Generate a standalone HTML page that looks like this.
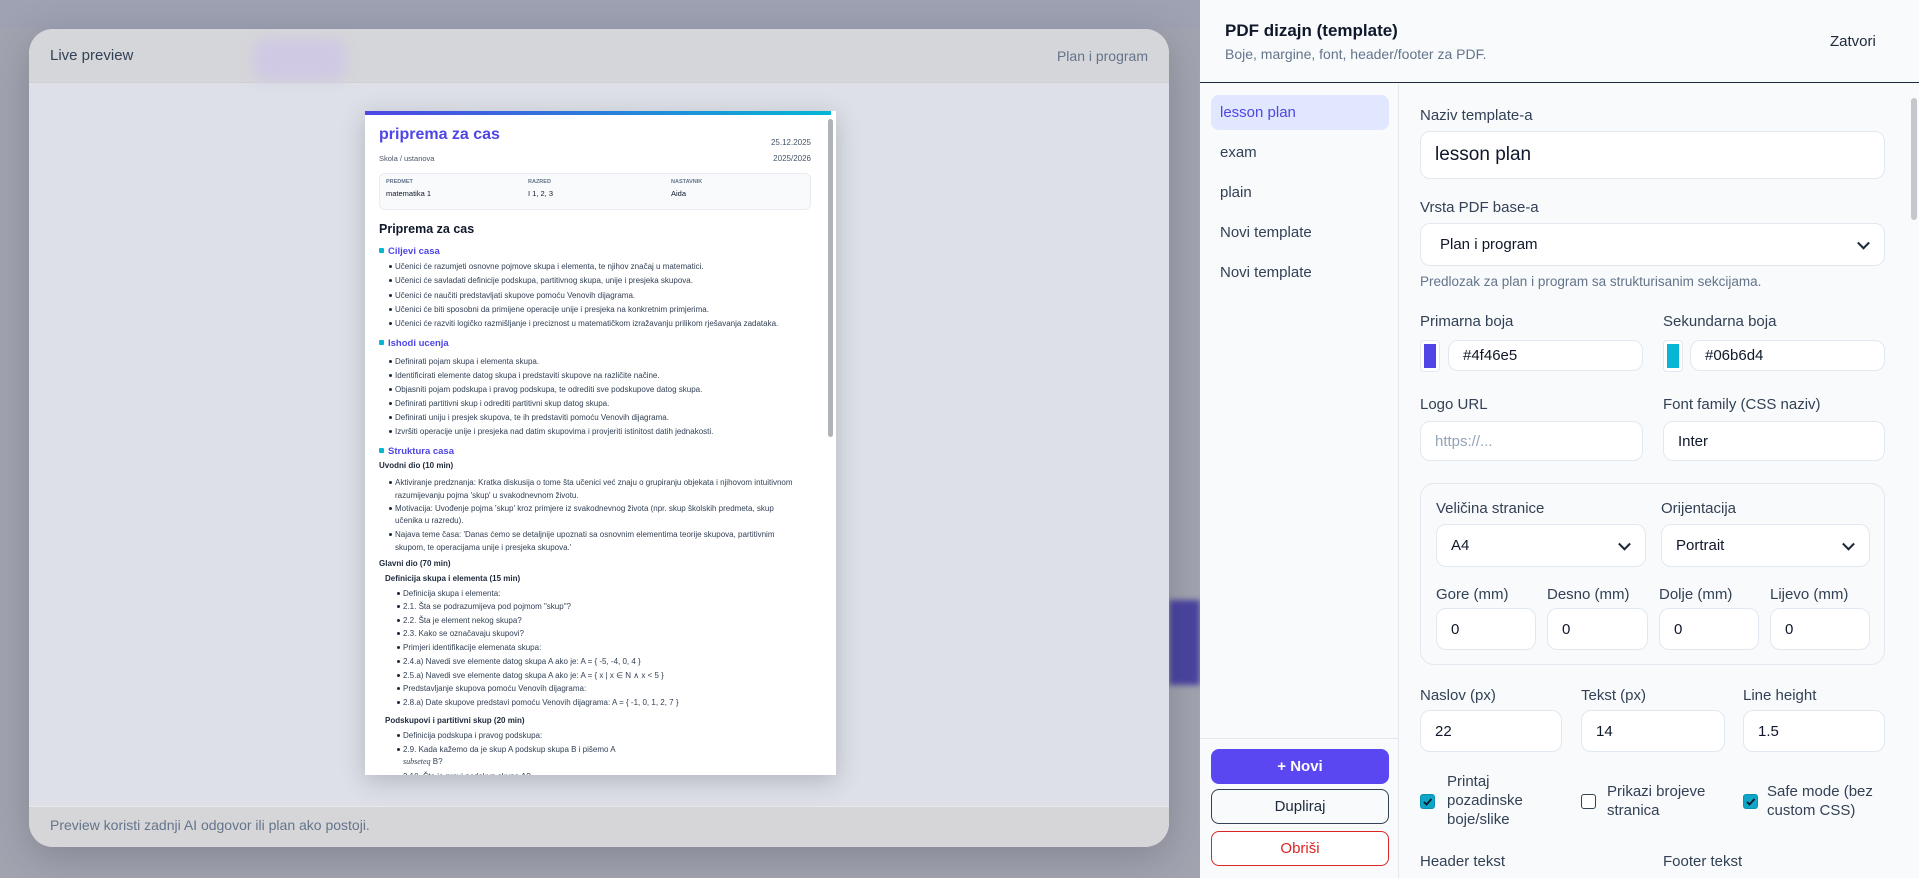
<!DOCTYPE html>
<html><head><meta charset="utf-8">
<style>
*{box-sizing:border-box;margin:0;padding:0}
body{width:1919px;height:878px;overflow:hidden;position:relative;background:#a2a5b0;font-family:"Liberation Sans",sans-serif;color:#1e293b}
.abs{position:absolute}
.card{left:29px;top:29px;width:1140px;height:818px;border-radius:24px;background:#dde0e7;overflow:hidden;box-shadow:0 10px 40px rgba(40,40,60,.25)}
.chead{left:0;top:0;width:1140px;height:54px;background:#d5d6d9;border-bottom:1px solid #cfd1d6}
.cfoot{left:0;top:777px;width:1140px;height:41px;background:#d6d6d8;border-top:1px solid #e6e7ea}
.doc{left:365px;top:111px;width:471px;height:664px;background:#fff;overflow:hidden;box-shadow:0 6px 22px rgba(60,60,80,.25)}
.doc .bar{left:0;top:0;width:466px;height:4px;background:linear-gradient(90deg,#4f46e5,#06b6d4)}
.doc div,.doc p{white-space:nowrap}
.t8{font-size:8px;color:#334155}
.li{position:absolute;font-size:8px;color:#334155}
.li:before{content:"";position:absolute;left:-6px;top:3px;width:3px;height:3px;border-radius:50%;background:#1e293b}
.sec{position:absolute;left:14px;font-size:9.5px;font-weight:bold;color:#4f46e5}
.sec:before{content:"";display:inline-block;width:5px;height:5px;background:#06b6d4;border-radius:1px;margin-right:4px;vertical-align:1px}
.sub{position:absolute;font-size:8px;font-weight:bold;color:#1e293b}
.panel{left:1200px;top:0;width:719px;height:878px;background:#f8fafc}
.lbl{position:absolute;font-size:15px;color:#334155}
.inp{position:absolute;background:#fff;border:1px solid #e2e8f0;border-radius:10px;font-size:15px;color:#0f172a;padding-left:14px;display:flex;align-items:center}
.sel:after{content:"";position:absolute;right:16px;top:50%;width:7px;height:7px;border-right:2px solid #1e293b;border-bottom:2px solid #1e293b;transform:translateY(-70%) rotate(45deg)}
.item{position:absolute;left:20px;font-size:15px;color:#334155}
.btn{position:absolute;left:11px;width:178px;height:35px;border-radius:8px;font-size:15px;display:flex;align-items:center;justify-content:center}
.cb{position:absolute;width:15px;height:15px;border-radius:3px}
.cbt{position:absolute;font-size:15px;color:#334155;line-height:19px}
</style></head><body>
<!-- blurred backdrop hints -->
<div class="abs" style="left:1169px;top:600px;width:31px;height:85px;background:#4a44a0;filter:blur(3px)"></div>
<div class="abs" style="left:0;top:0;width:1200px;height:29px;background:#9ea2b2"></div>

<div class="abs card">
  <div class="abs chead"></div>
  <div class="abs" style="left:224px;top:10px;width:93px;height:41px;background:#cfc9e4;border-radius:12px;filter:blur(6px)"></div>
  <div class="abs" style="left:21px;top:10px;font-size:15px;color:#334155;line-height:34px">Live preview</div>
  <div class="abs" style="right:21px;top:10px;font-size:14px;color:#64748b;line-height:34px">Plan i program</div>
  <div class="abs cfoot"></div>
  <div class="abs" style="left:21px;top:788px;font-size:14px;color:#64748b">Preview koristi zadnji AI odgovor ili plan ako postoji.</div>
</div>

<div class="abs doc">
  <div class="abs bar"></div>
  <div class="abs" style="left:463px;top:8px;width:5px;height:318px;background:#b0b3b8;border-radius:3px"></div>
  <div class="abs" style="left:14px;top:15px;font-size:16px;font-weight:bold;color:#4f46e5">priprema za cas</div>
  <div class="abs t8" style="right:25px;top:27px;color:#475569">25.12.2025</div>
  <div class="abs t8" style="left:14px;top:43px;color:#475569;font-size:7.5px">Skola / ustanova</div>
  <div class="abs t8" style="right:25px;top:43px;color:#475569">2025/2026</div>
  <div class="abs" style="left:14px;top:62px;width:432px;height:37px;background:#f8fafc;border:1px solid #e8ecf1;border-radius:6px"></div>
  <div class="abs" style="left:21px;top:68px;font-size:5.5px;color:#64748b;font-weight:bold">PREDMET</div>
  <div class="abs" style="left:163px;top:68px;font-size:5.5px;color:#64748b;font-weight:bold">RAZRED</div>
  <div class="abs" style="left:306px;top:68px;font-size:5.5px;color:#64748b;font-weight:bold">NASTAVNIK</div>
  <div class="abs" style="left:21px;top:78px;font-size:7.5px;color:#0f172a">matematika 1</div>
  <div class="abs" style="left:163px;top:78px;font-size:7.5px;color:#0f172a">I 1, 2, 3</div>
  <div class="abs" style="left:306px;top:78px;font-size:7.5px;color:#0f172a">Aida</div>
  <div class="abs" style="left:14px;top:111px;font-size:12.5px;font-weight:bold;color:#0f172a">Priprema za cas</div>

  <div class="sec" style="top:135px">Ciljevi casa</div>
  <div class="li" style="left:30px;top:151px">Učenici će razumjeti osnovne pojmove skupa i elementa, te njihov značaj u matematici.</div>
  <div class="li" style="left:30px;top:165px">Učenici će savladati definicije podskupa, partitivnog skupa, unije i presjeka skupova.</div>
  <div class="li" style="left:30px;top:180px">Učenici će naučiti predstavljati skupove pomoću Venovih dijagrama.</div>
  <div class="li" style="left:30px;top:194px">Učenici će biti sposobni da primijene operacije unije i presjeka na konkretnim primjerima.</div>
  <div class="li" style="left:30px;top:208px">Učenici će razviti logičko razmišljanje i preciznost u matematičkom izražavanju prilikom rješavanja zadataka.</div>

  <div class="sec" style="top:227px">Ishodi ucenja</div>
  <div class="li" style="left:30px;top:246px">Definirati pojam skupa i elementa skupa.</div>
  <div class="li" style="left:30px;top:260px">Identificirati elemente datog skupa i predstaviti skupove na različite načine.</div>
  <div class="li" style="left:30px;top:274px">Objasniti pojam podskupa i pravog podskupa, te odrediti sve podskupove datog skupa.</div>
  <div class="li" style="left:30px;top:288px">Definirati partitivni skup i odrediti partitivni skup datog skupa.</div>
  <div class="li" style="left:30px;top:302px">Definirati uniju i presjek skupova, te ih predstaviti pomoću Venovih dijagrama.</div>
  <div class="li" style="left:30px;top:316px">Izvršiti operacije unije i presjeka nad datim skupovima i provjeriti istinitost datih jednakosti.</div>

  <div class="sec" style="top:335px">Struktura casa</div>
  <div class="sub" style="left:14px;top:350px">Uvodni dio (10 min)</div>
  <div class="li" style="left:30px;top:367px">Aktiviranje predznanja: Kratka diskusija o tome šta učenici već znaju o grupiranju objekata i njihovom intuitivnom</div>
  <div class="t8 abs" style="left:30px;top:380px">razumijevanju pojma 'skup' u svakodnevnom životu.</div>
  <div class="li" style="left:30px;top:393px">Motivacija: Uvođenje pojma 'skup' kroz primjere iz svakodnevnog života (npr. skup školskih predmeta, skup</div>
  <div class="t8 abs" style="left:30px;top:405px">učenika u razredu).</div>
  <div class="li" style="left:30px;top:419px">Najava teme časa: 'Danas ćemo se detaljnije upoznati sa osnovnim elementima teorije skupova, partitivnim</div>
  <div class="t8 abs" style="left:30px;top:432px">skupom, te operacijama unije i presjeka skupova.'</div>

  <div class="sub" style="left:14px;top:448px">Glavni dio (70 min)</div>
  <div class="sub" style="left:20px;top:463px">Definicija skupa i elementa (15 min)</div>
  <div class="li" style="left:38px;top:478px">Definicija skupa i elementa:</div>
  <div class="li" style="left:38px;top:491px">2.1. Šta se podrazumijeva pod pojmom "skup"?</div>
  <div class="li" style="left:38px;top:505px">2.2. Šta je element nekog skupa?</div>
  <div class="li" style="left:38px;top:518px">2.3. Kako se označavaju skupovi?</div>
  <div class="li" style="left:38px;top:532px">Primjeri identifikacije elemenata skupa:</div>
  <div class="li" style="left:38px;top:546px">2.4.a) Navedi sve elemente datog skupa A ako je: A = { -5, -4, 0, 4 }</div>
  <div class="li" style="left:38px;top:560px">2.5.a) Navedi sve elemente datog skupa A ako je: A = { x | x ∈ N ∧ x &lt; 5 }</div>
  <div class="li" style="left:38px;top:573px">Predstavljanje skupova pomoću Venovih dijagrama:</div>
  <div class="li" style="left:38px;top:587px">2.8.a) Date skupove predstavi pomoću Venovih dijagrama: A = { -1, 0, 1, 2, 7 }</div>
  <div class="sub" style="left:20px;top:605px">Podskupovi i partitivni skup (20 min)</div>
  <div class="li" style="left:38px;top:620px">Definicija podskupa i pravog podskupa:</div>
  <div class="li" style="left:38px;top:634px">2.9. Kada kažemo da je skup A podskup skupa B i pišemo A</div>
  <div class="t8 abs" style="left:38px;top:646px"><i style="font-family:'Liberation Serif',serif">subseteq</i> B?</div>
  <div class="li" style="left:38px;top:661px">2.10. Šta je pravi podskup skupa A?</div>
</div>

<div class="abs panel">
  <div class="abs" style="left:0;top:0;width:719px;height:83px;border-bottom:1.5px solid #1e293b"></div>
  <div class="abs" style="left:25px;top:21px;font-size:17px;font-weight:bold;color:#0f172a">PDF dizajn (template)</div>
  <div class="abs" style="left:25px;top:46px;font-size:14px;color:#64748b">Boje, margine, font, header/footer za PDF.</div>
  <div class="abs" style="left:630px;top:33px;font-size:15px;color:#1e293b">Zatvori</div>

  <div class="abs" style="left:198px;top:84px;width:1px;height:794px;background:#e2e8f0"></div>
  <div class="abs" style="left:11px;top:95px;width:178px;height:35px;background:#e0e7ff;border-radius:8px"></div>
  <div class="item" style="top:104px;color:#4f46e5">lesson plan</div>
  <div class="item" style="top:144px">exam</div>
  <div class="item" style="top:184px">plain</div>
  <div class="item" style="top:224px">Novi template</div>
  <div class="item" style="top:264px">Novi template</div>
  <div class="abs" style="left:0;top:738px;width:198px;height:1px;background:#e2e8f0"></div>
  <div class="btn" style="top:749px;background:#5b47f2;color:#fff;font-weight:bold">+ Novi</div>
  <div class="btn" style="top:789px;border:1px solid #334155;color:#1e293b;background:#f8fafc">Dupliraj</div>
  <div class="btn" style="top:831px;border:1px solid #dc2626;color:#dc2626;background:#fff">Obriši</div>

  <div class="abs" style="left:711px;top:98px;width:6px;height:122px;background:#c5c7cc;border-radius:3px"></div>

  <div class="lbl" style="left:220px;top:107px">Naziv template-a</div>
  <div class="inp" style="left:220px;top:131px;width:465px;height:48px;font-size:19px">lesson plan</div>
  <div class="lbl" style="left:220px;top:199px">Vrsta PDF base-a</div>
  <div class="inp sel" style="left:220px;top:223px;width:465px;height:43px;font-size:15px;padding-left:19px">Plan i program</div>
  <div class="abs" style="left:220px;top:274px;font-size:13.5px;color:#64748b">Predlozak za plan i program sa strukturisanim sekcijama.</div>

  <div class="lbl" style="left:220px;top:313px">Primarna boja</div>
  <div class="lbl" style="left:463px;top:313px">Sekundarna boja</div>
  <div class="abs" style="left:220px;top:340px;width:20px;height:32px;border:1px solid #e2e8f0;border-radius:4px;background:#fff;padding:3px"><div style="width:100%;height:100%;background:#4f46e5"></div></div>
  <div class="inp" style="left:248px;top:340px;width:195px;height:31px">#4f46e5</div>
  <div class="abs" style="left:463px;top:340px;width:20px;height:32px;border:1px solid #e2e8f0;border-radius:4px;background:#fff;padding:3px"><div style="width:100%;height:100%;background:#06b6d4"></div></div>
  <div class="inp" style="left:490px;top:340px;width:195px;height:31px">#06b6d4</div>

  <div class="lbl" style="left:220px;top:396px">Logo URL</div>
  <div class="lbl" style="left:463px;top:396px">Font family (CSS naziv)</div>
  <div class="inp" style="left:220px;top:421px;width:223px;height:40px;color:#94a3b8">https://...</div>
  <div class="inp" style="left:463px;top:421px;width:222px;height:40px">Inter</div>

  <div class="abs" style="left:220px;top:483px;width:465px;height:182px;border:1px solid #e2e8f0;border-radius:14px;background:#f8fafc"></div>
  <div class="lbl" style="left:236px;top:500px">Veličina stranice</div>
  <div class="lbl" style="left:461px;top:500px">Orijentacija</div>
  <div class="inp sel" style="left:236px;top:524px;width:210px;height:43px">A4</div>
  <div class="inp sel" style="left:461px;top:524px;width:209px;height:43px">Portrait</div>
  <div class="lbl" style="left:236px;top:586px">Gore (mm)</div>
  <div class="lbl" style="left:347px;top:586px">Desno (mm)</div>
  <div class="lbl" style="left:459px;top:586px">Dolje (mm)</div>
  <div class="lbl" style="left:570px;top:586px">Lijevo (mm)</div>
  <div class="inp" style="left:236px;top:608px;width:100px;height:42px">0</div>
  <div class="inp" style="left:347px;top:608px;width:101px;height:42px">0</div>
  <div class="inp" style="left:459px;top:608px;width:100px;height:42px">0</div>
  <div class="inp" style="left:570px;top:608px;width:100px;height:42px">0</div>

  <div class="lbl" style="left:220px;top:687px">Naslov (px)</div>
  <div class="lbl" style="left:381px;top:687px">Tekst (px)</div>
  <div class="lbl" style="left:543px;top:687px">Line height</div>
  <div class="inp" style="left:220px;top:710px;width:142px;height:42px">22</div>
  <div class="inp" style="left:381px;top:710px;width:144px;height:42px">14</div>
  <div class="inp" style="left:543px;top:710px;width:142px;height:42px">1.5</div>

  <div class="cb" style="left:220px;top:794px;background:#0ea5c6;border:1px solid #0891b2"><svg width="13" height="13" viewBox="0 0 13 13" style="position:absolute;left:0;top:0"><path d="M3 7l2.5 2.5L10.5 4" stroke="#0f172a" stroke-width="1.8" fill="none"/></svg></div>
  <div class="cbt" style="left:247px;top:772px">Printaj<br>pozadinske<br>boje/slike</div>
  <div class="cb" style="left:381px;top:794px;background:#fff;border:1.5px solid #334155"></div>
  <div class="cbt" style="left:407px;top:782px">Prikazi brojeve<br>stranica</div>
  <div class="cb" style="left:543px;top:794px;background:#0ea5c6;border:1px solid #0891b2"><svg width="13" height="13" viewBox="0 0 13 13" style="position:absolute;left:0;top:0"><path d="M3 7l2.5 2.5L10.5 4" stroke="#0f172a" stroke-width="1.8" fill="none"/></svg></div>
  <div class="cbt" style="left:567px;top:782px">Safe mode (bez<br>custom CSS)</div>

  <div class="lbl" style="left:220px;top:853px">Header tekst</div>
  <div class="lbl" style="left:463px;top:853px">Footer tekst</div>
</div>
</body></html>
